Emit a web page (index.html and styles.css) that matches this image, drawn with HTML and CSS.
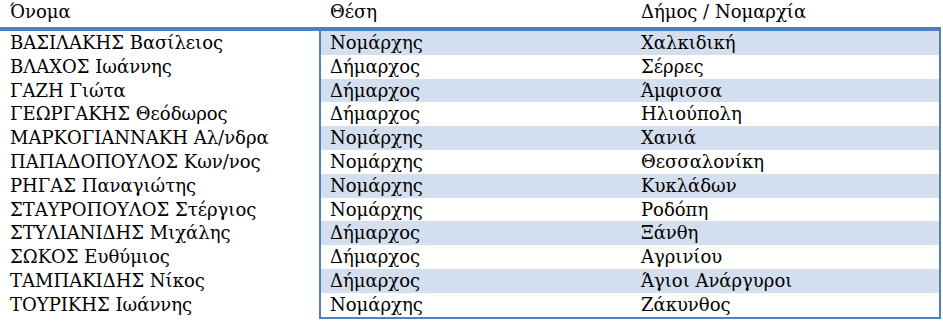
FILE: index.html
```html
<!DOCTYPE html>
<html lang="el">
<head>
    <meta charset="UTF-8">
    <title>Όνομα / Θέση / Δήμος</title>
    <link rel="stylesheet" href="styles.css">
</head>
<body>
    <div class="sheet">
        <!-- Header -->
        <div class="head">
            <div class="h-name">Όνομα</div>
            <div class="h-pos">Θέση</div>
            <div class="h-area">Δήμος / Νομαρχία</div>
        </div>

        <div class="body">
            <div class="names">
                <div class="cell">ΒΑΣΙΛΑΚΗΣ Βασίλειος</div>
                <div class="cell">ΒΛΑΧΟΣ Ιωάννης</div>
                <div class="cell">ΓΑΖΗ Γιώτα</div>
                <div class="cell">ΓΕΩΡΓΑΚΗΣ Θεόδωρος</div>
                <div class="cell">ΜΑΡΚΟΓΙΑΝΝΑΚΗ Αλ/νδρα</div>
                <div class="cell">ΠΑΠΑΔΟΠΟΥΛΟΣ Κων/νος</div>
                <div class="cell">ΡΗΓΑΣ Παναγιώτης</div>
                <div class="cell">ΣΤΑΥΡΟΠΟΥΛΟΣ Στέργιος</div>
                <div class="cell">ΣΤΥΛΙΑΝΙΔΗΣ Μιχάλης</div>
                <div class="cell">ΣΩΚΟΣ Ευθύμιος</div>
                <div class="cell">ΤΑΜΠΑΚΙΔΗΣ Νίκος</div>
                <div class="cell">ΤΟΥΡΙΚΗΣ Ιωάννης</div>
            </div>

            <div class="box">
                <div class="row"><span>Νομάρχης</span><span>Χαλκιδική</span></div>
                <div class="row"><span>Δήμαρχος</span><span>Σέρρες</span></div>
                <div class="row"><span>Δήμαρχος</span><span>Άμφισσα</span></div>
                <div class="row"><span>Δήμαρχος</span><span>Ηλιούπολη</span></div>
                <div class="row"><span>Νομάρχης</span><span>Χανιά</span></div>
                <div class="row"><span>Νομάρχης</span><span>Θεσσαλονίκη</span></div>
                <div class="row"><span>Νομάρχης</span><span>Κυκλάδων</span></div>
                <div class="row"><span>Νομάρχης</span><span>Ροδόπη</span></div>
                <div class="row"><span>Δήμαρχος</span><span>Ξάνθη</span></div>
                <div class="row"><span>Δήμαρχος</span><span>Αγρινίου</span></div>
                <div class="row"><span>Δήμαρχος</span><span>Άγιοι Ανάργυροι</span></div>
                <div class="row"><span>Νομάρχης</span><span>Ζάκυνθος</span></div>
            </div>
        </div>
    </div>
</body>
</html>
```

FILE: styles.css
```css
body {
    margin: 0;
    background-color: white;
    font-family: "DejaVu Serif", serif;
    font-size: 18px;
    color: #000;
}

.sheet {
    width: 941px;
}

.head {
    display: grid;
    grid-template-columns: 320px 311px 1fr;
    height: 27px;
    line-height: 24px;
    border-bottom: 4px solid #4f81bd;
}

.head > div {
    padding-left: 10px;
}

.body {
    display: grid;
    grid-template-columns: 319px 1fr;
}

.names {
    padding-left: 10px;
}

.cell, .row {
    height: 23.8px;
    line-height: 23px;
    white-space: nowrap;
}

.box {
    border: 2px solid #4f81bd;
    border-top: none;
}

.row {
    display: grid;
    grid-template-columns: 311px 1fr;
    padding-left: 9px;
}

.row:nth-child(odd) {
    background-color: #d3dfee;
}
```
